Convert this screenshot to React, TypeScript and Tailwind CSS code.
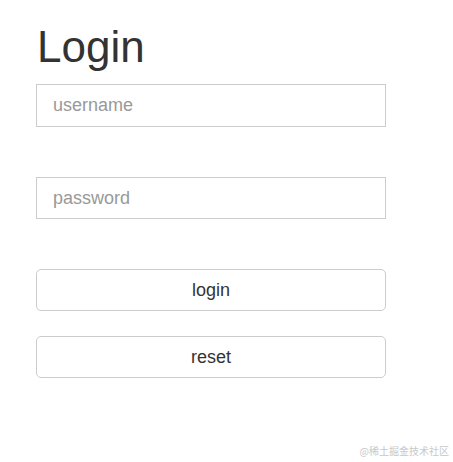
import React from 'react';

export default function App() {
  return (
    <div className="relative w-[453px] h-[462px] bg-white font-['Liberation_Sans',Arial,sans-serif] text-[#333]">
      <div className="pl-[36px] pt-[23px] w-[386px]">
        <h1 className="text-[44px] leading-[48px] font-normal pl-[1px]">Login</h1>

        <input
          type="text"
          placeholder="username"
          className="block mt-[13px] w-[350px] h-[43px] border border-[#ccc] px-[16px] text-[18px] placeholder:text-[#999] outline-none"
        />
        <input
          type="password"
          placeholder="password"
          className="block mt-[50px] w-[350px] h-[42px] border border-[#ccc] px-[16px] text-[18px] placeholder:text-[#999] outline-none"
        />

        <button className="block mt-[50px] w-[350px] h-[42px] border border-[#ccc] rounded-[5px] bg-white text-[18px] text-[#333]">
          login
        </button>
        <button className="block mt-[25px] w-[350px] h-[42px] border border-[#ccc] rounded-[5px] bg-white text-[18px] text-[#333]">
          reset
        </button>
      </div>

      {/* watermark */}
      <div className="absolute right-[4px] bottom-[5px] text-[10px] leading-[13px] text-[#c8c8c8] font-['Noto_Sans_CJK_SC',sans-serif]">
        @稀土掘金技术社区
      </div>
    </div>
  );
}
